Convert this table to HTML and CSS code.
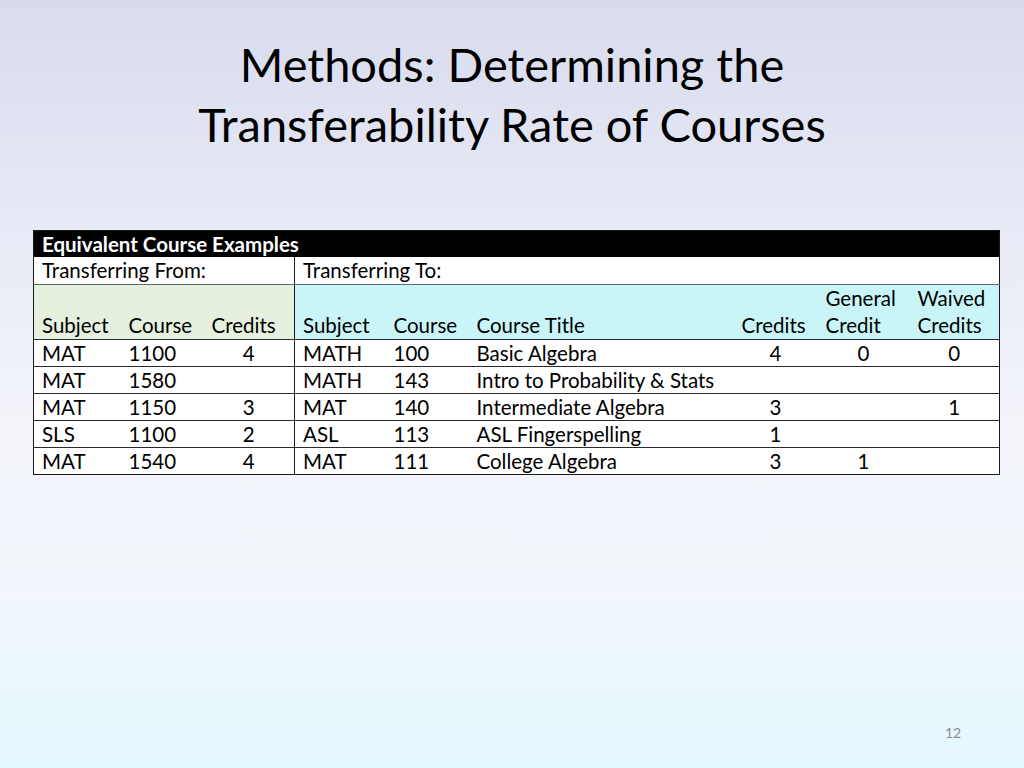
FILE: index.html
```html
<!DOCTYPE html>
<html>
<head>
<meta charset="utf-8">
<link rel="stylesheet" href="styles.css">
</head>
<body>
<div class="slide">
  <h1 class="title">Methods: Determining the<br>Transferability Rate of Courses</h1>
  <table class="courses">
    <colgroup>
      <col style="width:87px"><col style="width:83px"><col style="width:91px">
      <col style="width:91px"><col style="width:83px"><col style="width:265px">
      <col style="width:84px"><col style="width:92px"><col style="width:90px">
    </colgroup>
    <tr class="caption-row"><td colspan="9">Equivalent Course Examples</td></tr>
    <tr class="side-row"><td colspan="3" class="split">Transferring From:</td><td colspan="6">Transferring To:</td></tr>
    <tr class="head-row">
      <td class="from">Subject</td><td class="from">Course</td><td class="from split">Credits</td>
      <td class="to">Subject</td><td class="to">Course</td><td class="to">Course Title</td>
      <td class="to">Credits</td><td class="to">General<br>Credit</td><td class="to">Waived<br>Credits</td>
    </tr>
    <tr class="data"><td>MAT</td><td>1100</td><td class="num split">4</td><td>MATH</td><td>100</td><td>Basic Algebra</td><td class="num">4</td><td class="num">0</td><td class="num">0</td></tr>
    <tr class="data"><td>MAT</td><td>1580</td><td class="num split"></td><td>MATH</td><td>143</td><td>Intro to Probability &amp; Stats</td><td class="num"></td><td class="num"></td><td class="num"></td></tr>
    <tr class="data"><td>MAT</td><td>1150</td><td class="num split">3</td><td>MAT</td><td>140</td><td>Intermediate Algebra</td><td class="num">3</td><td class="num"></td><td class="num">1</td></tr>
    <tr class="data"><td>SLS</td><td>1100</td><td class="num split">2</td><td>ASL</td><td>113</td><td>ASL Fingerspelling</td><td class="num">1</td><td class="num"></td><td class="num"></td></tr>
    <tr class="data"><td>MAT</td><td>1540</td><td class="num split">4</td><td>MAT</td><td>111</td><td>College Algebra</td><td class="num">3</td><td class="num">1</td><td class="num"></td></tr>
  </table>
  <div class="page-num">12</div>
</div>
</body>
</html>
```
FILE: styles.css
```css
html, body {
  margin: 0;
  padding: 0;
}
body {
  font-family: Lato, "Open Sans", sans-serif;
}
.slide {
  width: 1024px;
  height: 768px;
  box-sizing: border-box;
  padding-top: 34px;
  position: relative;
  background: linear-gradient(180deg, #d8dbee 0%, #e8eaf5 30%, #f3f4fa 55%, #f1f7fc 78%, #e3f8fd 100%);
  display: flex;
  flex-direction: column;
  align-items: center;
}
.title {
  margin: 0;
  font-weight: normal;
  font-size: 47px;
  line-height: 60px;
  text-align: center;
  color: #000;
}
.courses {
  margin-top: 76px;
  align-self: flex-start;
  margin-left: 33px;
  table-layout: fixed;
  width: 966px;
  border-collapse: collapse;
  font-size: 20.5px;
  color: #000;
  border: 1px solid #1a1a1a;
}
.courses td {
  padding: 0 8px;
  white-space: nowrap;
  overflow: visible;
}
.caption-row td {
  background: #000;
  color: #fff;
  font-weight: bold;
  height: 26px;
  line-height: 26px;
}
.side-row td {
  background: #fff;
  height: 27px;
  line-height: 27px;
  border-bottom: 1px solid #5d6b6b;
}
.head-row td {
  height: 54px;
  vertical-align: bottom;
  line-height: 27px;
}
.head-row .from { background: #e5f0df; }
.head-row .to { background: #c9f5f8; }
.data td {
  background: #fff;
  height: 26px;
  line-height: 26px;
  border-top: 1px solid #2a2a2a;
}
.courses .num {
  text-align: center;
}
.courses .split {
  border-right: 1px solid #1a1a1a;
}
.page-num {
  position: absolute;
  left: 945px;
  top: 724px;
  font-size: 14px;
  color: #8a8c94;
}
```
